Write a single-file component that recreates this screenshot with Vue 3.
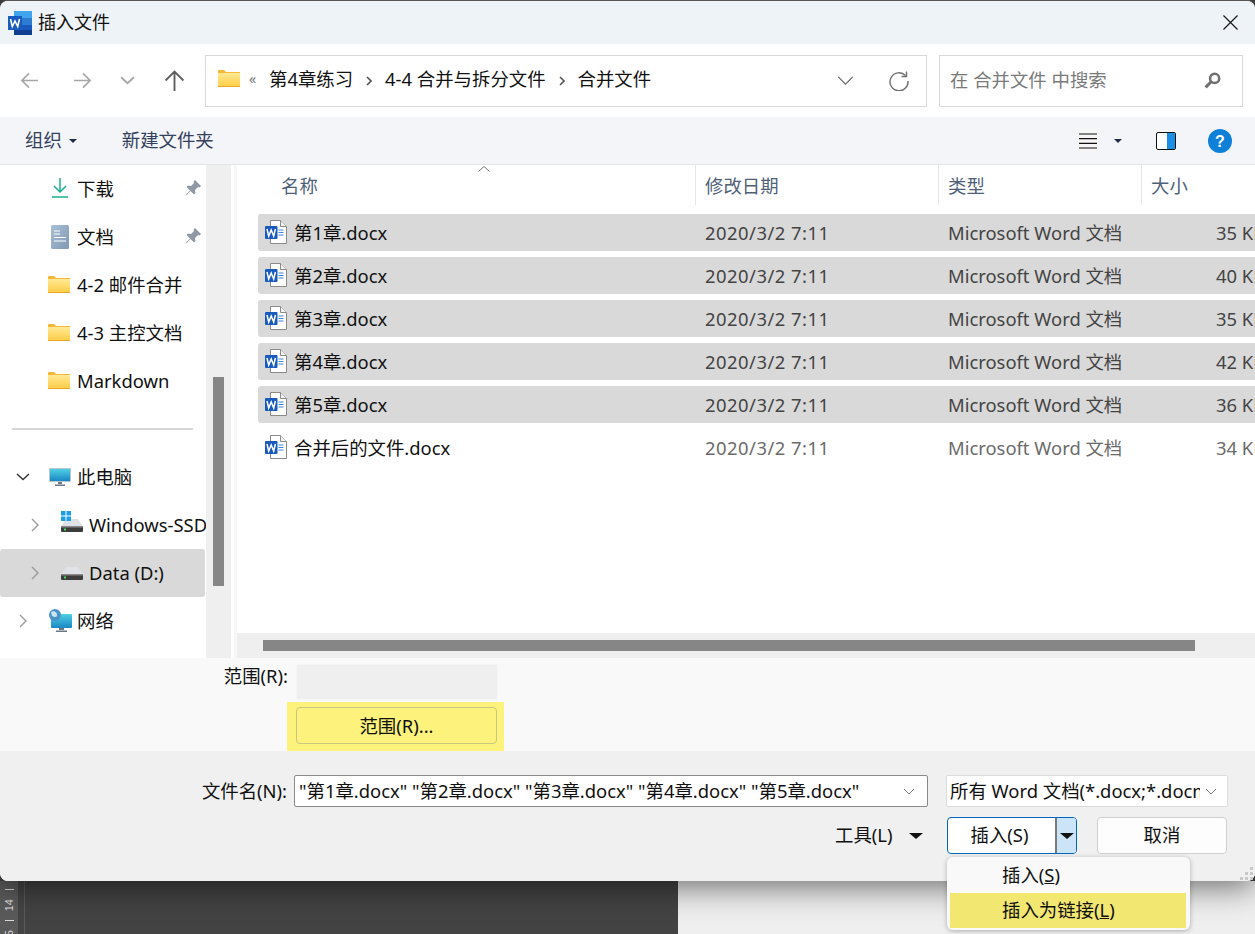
<script setup>
const quick = [
  { label: '4-2 邮件合并' },
  { label: '4-3 主控文档' },
  { label: 'Markdown' }
]
const files = [
  { name: '第1章.docx', size: '35 KB', selected: true },
  { name: '第2章.docx', size: '40 KB', selected: true },
  { name: '第3章.docx', size: '35 KB', selected: true },
  { name: '第4章.docx', size: '42 KB', selected: true },
  { name: '第5章.docx', size: '36 KB', selected: true },
  { name: '合并后的文件.docx', size: '34 KB', selected: false }
]
</script>

<template>
  <div class="page">
    <svg class="defs" width="0" height="0" aria-hidden="true">
      <defs>
        <linearGradient id="fold" x1="0" y1="0" x2="0" y2="1">
          <stop offset="0" stop-color="#ffe894" />
          <stop offset="1" stop-color="#ffcf4a" />
        </linearGradient>
        <linearGradient id="doc" x1="0" y1="0" x2="1" y2="1">
          <stop offset="0" stop-color="#a9c0d8" />
          <stop offset="1" stop-color="#7f98b3" />
        </linearGradient>
        <linearGradient id="screen" x1="0" y1="0" x2="0" y2="1">
          <stop offset="0" stop-color="#4fd0e4" />
          <stop offset="1" stop-color="#1a86c4" />
        </linearGradient>
        <symbol id="folder" viewBox="0 0 22 17">
          <path d="M0 1a1 1 0 0 1 1-1h5l2 2h14v15H0z" fill="#f5b93a" />
          <path d="M0 3h22v13H0z" fill="url(#fold)" />
          <path d="M0 16h22v1H0z" fill="#eba826" />
        </symbol>
        <symbol id="word" viewBox="0 0 22 24">
          <path d="M5.500 .5h10l6 6v17h-16z" fill="#fff" stroke="#8a8a8a" />
          <path d="M15.500 .5v6h6" fill="#f2f2f2" stroke="#8a8a8a" />
          <path d="M13.500 10h5M13.500 12.500h5M13.500 15h5" stroke="#3d85d8" stroke-width="1" />
          <rect x="0" y="6" width="12.500" height="13" rx="1" fill="#185abd" />
          <path d="M2 9l1.700 7 2.500-6 2.500 6 1.700-7" fill="none" stroke="#fff" stroke-width="1.500" />
        </symbol>
        <symbol id="pin" viewBox="0 0 16 16">
          <path d="M10 0l6 6-1.500 1.500L13 7l-3 3 .5 3L9 14.500 5.500 11 1 15.500l-.5-.5L5 10.500 1.500 7 3 5.500l3 .5 3-3-.5-1.500z" fill="#8f9aa6" />
        </symbol>
        <symbol id="drive" viewBox="0 0 22 14">
          <path d="M5 1h12l5 7H0z" fill="#dfe2e6" />
          <path d="M0 8h22v5a1 1 0 0 1-1 1H1a1 1 0 0 1-1-1z" fill="#3d3d3d" />
          <path d="M0 8h22v1.500H0z" fill="#8a8a8a" />
          <rect x="3" y="10.500" width="2" height="2" fill="#3fe04a" />
        </symbol>
      </defs>
    </svg>

    <div class="dialog">
      <header class="titlebar">
        <svg class="app-icon" viewBox="0 0 24 24">
          <rect x="6" y="0" width="18" height="7" fill="#41a5ee" />
          <rect x="6" y="7" width="18" height="7" fill="#2b7cd3" />
          <rect x="6" y="14" width="18" height="5" fill="#185abd" />
          <rect x="6" y="19" width="18" height="5" fill="#103f91" />
          <rect x="0" y="5" width="14" height="14" fill="#1a5cbd" />
          <path d="M2.500 8l1.800 7.500L7 10l2.700 5.500L11.500 8" fill="none" stroke="#fff" stroke-width="1.600" />
        </svg>
        <span class="title">插入文件</span>
        <svg class="close" viewBox="0 0 16 16"><path d="M.5.5l15 15M15.500.5l-15 15" stroke="#1a1a1a" stroke-width="1.300" /></svg>
      </header>

      <nav class="navbar">
        <svg class="nav-ic back" viewBox="0 0 20 20"><path d="M19 10H2M9.500 2.500L2 10l7.500 7.500" fill="none" stroke="#a8a8a8" stroke-width="1.800" /></svg>
        <svg class="nav-ic fwd" viewBox="0 0 20 20"><path d="M1 10h17M10.500 2.500L18 10l-7.500 7.500" fill="none" stroke="#a8a8a8" stroke-width="1.800" /></svg>
        <svg class="nav-down" viewBox="0 0 14 8"><path d="M1 1l6 5.500L13 1" fill="none" stroke="#a8a8a8" stroke-width="1.800" /></svg>
        <svg class="nav-up" viewBox="0 0 20 20"><path d="M10 20V2M1.500 10L10 1.500 18.500 10" fill="none" stroke="#5f5f5f" stroke-width="1.800" /></svg>
        <div class="address">
          <svg class="addr-folder"><use href="#folder" /></svg>
          <span class="laquo">«</span>
          <span class="crumb first">第4章练习</span>
          <svg class="sep" viewBox="0 0 6 10"><path d="M1 1l4 4-4 4" fill="none" stroke="#555" stroke-width="1.600" /></svg>
          <span class="crumb">4-4 合并与拆分文件</span>
          <svg class="sep" viewBox="0 0 6 10"><path d="M1 1l4 4-4 4" fill="none" stroke="#555" stroke-width="1.600" /></svg>
          <span class="crumb">合并文件</span>
          <svg class="addr-down" viewBox="0 0 18 10"><path d="M1 1l8 8 8-8" fill="none" stroke="#666" stroke-width="1.300" /></svg>
          <svg class="refresh" viewBox="0 0 20 20"><path d="M16.500 4.500A9 9 0 1 0 19 10" fill="none" stroke="#707070" stroke-width="1.400" /><path d="M17.500 .5v5h-5" fill="none" stroke="#707070" stroke-width="1.400" /></svg>
        </div>
        <div class="search">
          <span class="search-text">在 合并文件 中搜索</span>
          <svg class="search-ic" viewBox="0 0 16 16"><circle cx="10" cy="6" r="4.300" fill="none" stroke="#707070" stroke-width="2.400" /><path d="M6.800 9.200L1.500 14.500" stroke="#707070" stroke-width="2.800" /></svg>
        </div>
      </nav>

      <div class="toolbar">
        <span class="tool-text">组织</span>
        <i class="tri small"></i>
        <span class="tool-text newfolder">新建文件夹</span>
        <div class="tool-right">
          <span class="view-btn"><svg class="lines" viewBox="0 0 18 16"><path d="M0 1h18M0 5.700h18M0 10.300h18M0 15h18" stroke="#111" stroke-width="1.200" /></svg></span>
          <i class="tri small view-tri"></i>
          <svg class="pane" viewBox="0 0 20 18"><rect x=".5" y=".5" width="19" height="17" rx="1.500" fill="#fff" stroke="#111" /><rect x="11" y="1" width="8" height="16" fill="#1b8fe3" /></svg>
          <svg class="help" viewBox="0 0 24 24"><circle cx="12" cy="12" r="12" fill="#0f80d8" /><text x="12" y="17.500" class="help-q" text-anchor="middle">?</text></svg>
        </div>
      </div>

      <div class="content">
        <aside class="sidebar">
          <div class="tree">
            <div class="tree-row l1">
              <svg class="ic-dl" viewBox="0 0 16 20"><path d="M8 0v14M2 8l6 6 6-6" fill="none" stroke="#17b08f" stroke-width="1.500" /><path d="M0 19h16" stroke="#17b08f" stroke-width="1.500" /></svg>
              <span>下载</span>
              <svg class="pin"><use href="#pin" /></svg>
            </div>
            <div class="tree-row l1">
              <svg class="ic-doc" viewBox="0 0 18 24"><rect width="18" height="24" rx="1.500" fill="url(#doc)" /><path d="M3 6h6M3 9h6M3 12.500h12M3 16h12" stroke="#fff" stroke-width="1.200" /></svg>
              <span>文档</span>
              <svg class="pin"><use href="#pin" /></svg>
            </div>
            <div v-for="q in quick" :key="q.label" class="tree-row l1">
              <svg class="ic-folder"><use href="#folder" /></svg>
              <span>{{ q.label }}</span>
            </div>
            <div class="divider"></div>
            <div class="tree-row pc">
              <svg class="chev down" viewBox="0 0 14 8"><path d="M1 1l6 5.500L13 1" fill="none" stroke="#333" stroke-width="1.400" /></svg>
              <svg class="ic-pc" viewBox="0 0 22 18"><rect width="22" height="14" rx="1" fill="#b9c6cf" /><rect x="1" y="1" width="20" height="12" fill="url(#screen)" /><path d="M9 14h4v2H9zM6 16.500h10V18H6z" fill="#6b7780" /></svg>
              <span>此电脑</span>
            </div>
            <div class="tree-row l2">
              <svg class="chev" viewBox="0 0 8 14"><path d="M1 1l6 6-6 6" fill="none" stroke="#9a9a9a" stroke-width="1.400" /></svg>
              <span class="drive-wrap win">
                <svg class="winlogo" viewBox="0 0 10 10"><path d="M0 0h4.500v4.500H0zM5.500 0H10v4.500H5.500zM0 5.500h4.500V10H0zM5.500 5.500H10V10H5.500z" fill="#1c9fe8" /></svg>
                <svg class="ic-drive"><use href="#drive" /></svg>
              </span>
              <span class="cut">Windows-SSD (C:)</span>
            </div>
            <div class="tree-row l2 active">
              <svg class="chev" viewBox="0 0 8 14"><path d="M1 1l6 6-6 6" fill="none" stroke="#9a9a9a" stroke-width="1.400" /></svg>
              <span class="drive-wrap">
                <svg class="ic-drive"><use href="#drive" /></svg>
              </span>
              <span>Data (D:)</span>
            </div>
            <div class="tree-row net">
              <svg class="chev" viewBox="0 0 8 14"><path d="M1 1l6 6-6 6" fill="none" stroke="#9a9a9a" stroke-width="1.400" /></svg>
              <svg class="ic-net" viewBox="0 0 24 24"><rect x="3" y="5" width="21" height="14" rx="1" fill="url(#screen)" /><path d="M11 19h5v2h-5zM8 21.500h11V23H8z" fill="#6b7780" /><circle cx="7" cy="6" r="6" fill="#4a93c8" /><path d="M3 3c3-2 6 0 6 3s-3 2-5 1" fill="#c9e5f4" /></svg>
              <span>网络</span>
            </div>
          </div>
          <div class="vtrack"><div class="vthumb"></div></div>
        </aside>

        <section class="filepane">
          <div class="filehead">
            <svg class="sort" viewBox="0 0 12 6"><path d="M.5 5.500L6 .5l5.500 5" fill="none" stroke="#777" /></svg>
            <div class="hcell c-name">名称</div>
            <div class="hcell c-date">修改日期</div>
            <div class="hcell c-type">类型</div>
            <div class="hcell c-size">大小</div>
          </div>
          <div class="filelist">
            <div v-for="f in files" :key="f.name" class="file" :class="{ sel: f.selected }">
              <div class="c-name f-name"><svg class="ic-word"><use href="#word" /></svg><span>{{ f.name }}</span></div>
              <div class="c-date meta date">2020/3/2 7:11</div>
              <div class="c-type meta">Microsoft Word 文档</div>
              <div class="c-size meta">{{ f.size }}</div>
            </div>
          </div>
          <div class="htrack"><div class="hthumb"></div></div>
        </section>
      </div>

      <div class="rangebar">
        <div class="range-row">
          <span class="range-label">范围(R):</span>
          <div class="range-input"></div>
        </div>
        <div class="range-mark"><button class="range-btn">范围(R)...</button></div>
      </div>

      <footer class="footer">
        <div class="foot-row">
          <span class="fn-label">文件名(N):</span>
          <div class="fn-input">
            <span class="fn-value">"第1章.docx" "第2章.docx" "第3章.docx" "第4章.docx" "第5章.docx"</span>
            <svg class="combo" viewBox="0 0 12 7"><path d="M1 1l5 5 5-5" fill="none" stroke="#777" /></svg>
          </div>
          <div class="filter">
            <span class="filter-value">所有 Word 文档(*.docx;*.docm;*.dotx;*.dotm)</span>
            <svg class="combo" viewBox="0 0 12 7"><path d="M1 1l5 5 5-5" fill="none" stroke="#777" /></svg>
          </div>
        </div>
        <div class="foot-row actions">
          <span class="tools">工具(L)</span>
          <i class="tri big tools-tri"></i>
          <div class="split">
            <span class="split-main">插入(S)</span>
            <span class="split-arrow"><i class="tri big"></i></span>
          </div>
          <button class="cancel">取消</button>
        </div>
        <div class="menu">
          <div class="menu-item">插入(<u>S</u>)</div>
          <div class="menu-item hot">插入为链接(<u>L</u>)</div>
        </div>
        <svg class="grip" viewBox="0 0 13 13"><path d="M10 0h3v3h-3zM5 5h3v3H5zM10 5h3v3h-3zM0 10h3v3H0zM5 10h3v3H5zM10 10h3v3h-3z" fill="#c8c8c8" /></svg>
      </footer>
    </div>

    <div class="below">
      <div class="doc-area">
        <div class="ruler">
          <i class="tick"></i>
          <span class="rnum">14</span>
          <i class="tick"></i>
          <span class="rnum">15</span>
        </div>
        <div class="doc-bg"></div>
      </div>
      <div class="doc-light"></div>
    </div>
  </div>
</template>

<style>
html, body { margin: 0; background: #444; }
</style>

<style scoped>
.page {
  width: 1255px;
  height: 934px;
  overflow: hidden;
  display: flex;
  flex-direction: column;
  background: #444;
  font-family: "Noto Sans", "Noto Sans CJK SC", sans-serif;
  font-size: 18.4px;
  color: #111;
  line-height: 24px;
}
.defs { position: absolute; }
svg { display: block; flex: none; }
.dialog {
  height: 881px;
  flex: none;
  display: flex;
  flex-direction: column;
  background: #f0f0f0;
  border-radius: 8px;
  border-top: 1px solid #555;
  box-sizing: border-box;
  position: relative;
  z-index: 1;
  box-shadow: 0 6px 32px rgba(0, 0, 0, .55);
}
.titlebar {
  height: 43px;
  flex: none;
  background: #eef3f8;
  display: flex;
  align-items: center;
  padding-left: 8px;
  border-radius: 8px 8px 0 0;
}
.app-icon { width: 24px; height: 24px; }
.title { margin-left: 6px; font-size: 18px; padding-bottom: 2px; }
.close { width: 15px; height: 15px; margin-left: auto; margin-right: 17px; }
.navbar {
  height: 73px;
  flex: none;
  background: #fff;
  display: flex;
  align-items: center;
  padding-left: 20px;
}
.nav-ic { width: 19px; height: 19px; }
.fwd { margin-left: 34px; }
.nav-down { width: 15px; height: 9px; margin-left: 28px; }
.nav-up { width: 21px; height: 21px; margin-left: 29px; }
.address {
  width: 722px;
  height: 52px;
  box-sizing: border-box;
  margin-left: 20px;
  border: 1px solid #d9d9d9;
  display: flex;
  align-items: center;
  padding-left: 12px;
}
.addr-folder { width: 22px; height: 17px; margin-bottom: 4px; }
.laquo { margin-left: 9px; font-size: 14px; color: #777; width: 12px; padding-bottom: 4px; }
.crumb { white-space: nowrap; padding-bottom: 4px; }
.crumb.first { margin-left: 8px; }
.sep { width: 6px; height: 10px; margin: 0 13px; }
.addr-down { width: 17px; height: 9px; margin-left: auto; }
.refresh { width: 20px; height: 20px; margin: 0 17px 0 35px; }
.search {
  width: 304px;
  height: 52px;
  box-sizing: border-box;
  margin-left: 12px;
  border: 1px solid #d9d9d9;
  display: flex;
  align-items: center;
  justify-content: space-between;
  padding: 0 21px 0 10px;
}
.search-text { color: #7a7a7a; white-space: nowrap; padding-bottom: 2px; }
.search-ic { width: 17px; height: 17px; }
.toolbar {
  height: 48px;
  flex: none;
  box-sizing: border-box;
  background: #f3f5f8;
  border-bottom: 1px solid #e5e5e5;
  display: flex;
  align-items: center;
  padding-left: 25px;
}
.tool-text { color: #33415c; padding-bottom: 2px; }
.newfolder { margin-left: 45px; }
.tri {
  display: block;
  flex: none;
  width: 0;
  height: 0;
  border-style: solid;
  border-color: #111 transparent transparent;
}
.tri.small {
  border-width: 4px 4px 0;
  border-top-color: #1d2c4a;
  margin-left: 7px;
}
.tri.big { border-width: 6px 7px 0; }
.tool-right {
  margin-left: auto;
  display: flex;
  align-items: center;
  padding-right: 23px;
}
.view-btn {
  width: 24px;
  height: 24px;
  background: #f6f6f6;
  display: flex;
  align-items: center;
  justify-content: center;
}
.lines { width: 18px; height: 16px; }
.tri.view-tri { margin-left: 14px; }
.pane { width: 20px; height: 18px; margin-left: 34px; }
.help { width: 24px; height: 24px; margin-left: 32px; }
.help-q { fill: #fff; font-size: 16px; font-weight: 700; font-family: "Liberation Sans", sans-serif; }
.content {
  height: 493px;
  flex: none;
  display: flex;
  background: #fff;
}
.sidebar {
  width: 231px;
  flex: none;
  display: flex;
}
.tree { width: 206px; flex: none; overflow: hidden; }
.tree-row {
  height: 48px;
  box-sizing: border-box;
  display: flex;
  align-items: center;
  white-space: nowrap;
  border-radius: 3px;
}
.tree-row.l1 { padding-left: 48px; }
.ic-dl { width: 16px; height: 22px; margin: 0 9px 2px 4px; }
.ic-doc { width: 18px; height: 24px; margin: 0 8px 1px 3px; }
.ic-folder { width: 22px; height: 17px; margin: 0 7px 2px 0; }
.pin { width: 16px; height: 16px; margin: 0 5px 2px auto; }
.divider { height: 2px; background: #d6d6d6; margin: 23px 13px 23px 12px; }
.tree-row.pc { padding-left: 16px; }
.chev.down { width: 14px; height: 8px; }
.ic-pc { width: 22px; height: 18px; margin: 0 6px 0 19px; }
.chev { width: 8px; height: 14px; }
.tree-row.l2 { padding-left: 31px; }
.drive-wrap {
  width: 22px;
  height: 14px;
  margin-left: 22px;
  margin-right: 6px;
  position: relative;
  flex: none;
}
.ic-drive { width: 22px; height: 14px; }
.drive-wrap.win { margin-top: -1px; }
.winlogo { width: 10px; height: 10px; position: absolute; left: 0; top: -7px; }
.cut { white-space: nowrap; }
.active { background: #d9d9d9; width: 205px; }
.tree-row.net { padding-left: 19px; }
.ic-net { width: 24px; height: 24px; margin: 0 5px 0 21px; }
.vtrack {
  width: 25px;
  flex: none;
  background: #efefef;
  display: flex;
  justify-content: center;
  box-sizing: border-box;
  padding-top: 212px;
}
.vthumb { width: 11px; height: 209px; background: #868686; }
.filepane {
  flex: 1;
  min-width: 0;
  margin-left: 3px;
  border-left: 3px solid #f7f7f7;
  display: flex;
  flex-direction: column;
  overflow: hidden;
  position: relative;
}
.filehead {
  height: 49px;
  flex: none;
  display: grid;
  grid-template-columns: 459px 243px 203px 114px;
  box-sizing: border-box;
}
.sort { width: 12px; height: 6px; position: absolute; left: 241px; top: 1px; }
.hcell {
  color: #4f6178;
  height: 40px;
  border-right: 1px solid #e5e5e5;
  padding-left: 9px;
  padding-top: 9px;
  box-sizing: border-box;
}
.hcell.c-name { padding-left: 44px; }
.hcell.c-size { border-right: 0; }
.filelist { flex: 1; min-height: 0; padding-left: 21px; }
.file {
  width: 1000px;
  height: 37px;
  margin-bottom: 6px;
  display: grid;
  grid-template-columns: 438px 243px 203px 114px;
  align-items: center;
  border-radius: 3px 0 0 3px;
  white-space: nowrap;
}
.file.sel { background: #d9d9d9; }
.f-name { display: flex; align-items: center; padding-left: 7px; }
.ic-word { width: 22px; height: 24px; margin-right: 7px; margin-top: -1px; }
.meta { padding-left: 9px; color: #6b6b6b; }
.meta.date { letter-spacing: .5px; }
.file.sel .meta { color: #444; }
.c-size.meta { padding-left: 74px; }
.htrack {
  height: 25px;
  flex: none;
  background: #efefef;
  padding: 7px 0 0 26px;
  box-sizing: border-box;
}
.hthumb { width: 932px; height: 11px; background: #868686; }
.rangebar {
  height: 93px;
  flex: none;
  box-sizing: border-box;
  background: #f9f9f9;
  padding-top: 6px;
}
.range-row { display: flex; align-items: flex-start; height: 36px; }
.range-label { width: 288px; text-align: right; white-space: nowrap; }
.range-input {
  width: 202px;
  height: 36px;
  box-sizing: border-box;
  margin-left: 8px;
  background: #efefef;
  border: 1px solid #f6f6f6;
  border-radius: 2px;
}
.range-mark {
  width: 217px;
  height: 49px;
  margin: 2px 0 0 287px;
  box-sizing: border-box;
  background: #fdf27c;
  padding: 5px 0 0 9px;
}
.range-btn {
  display: block;
  width: 201px;
  height: 37px;
  padding: 0;
  background: transparent;
  border: 1px solid #c9c682;
  border-radius: 4px;
  font: inherit;
  color: #111;
}
.footer {
  flex: 1;
  min-height: 0;
  background: #f0f0f0;
  position: relative;
  border-radius: 0 0 8px 8px;
  padding-top: 24px;
  box-sizing: border-box;
}
.foot-row { display: flex; align-items: center; }
.fn-label { width: 287px; text-align: right; white-space: nowrap; }
.fn-input, .filter {
  height: 32px;
  box-sizing: border-box;
  background: #fff;
  display: flex;
  align-items: center;
  justify-content: space-between;
  border-radius: 2px;
}
.fn-input {
  width: 634px;
  margin-left: 7px;
  border: 1px solid #8a8a8a;
  padding: 0 12px 0 4px;
}
.fn-value { white-space: nowrap; }
.filter {
  width: 282px;
  margin-left: 18px;
  border: 1px solid #dcdcdc;
  padding: 0 10px 0 3px;
}
.filter-value {
  width: 250px;
  overflow: hidden;
  white-space: nowrap;
}
.combo { width: 12px; height: 7px; }
.actions { margin-top: 10px; height: 37px; padding-left: 835px; }
.tools { width: 57px; white-space: nowrap; padding-bottom: 2px; }
.tools-tri { margin-left: 17px; }
.split {
  width: 130px;
  height: 37px;
  box-sizing: border-box;
  margin-left: 24px;
  border: 1px solid #0067c0;
  border-radius: 4px;
  background: #fff;
  display: flex;
  overflow: hidden;
}
.split-main { width: 107px; text-align: center; line-height: 33px; padding-right: 4px; box-sizing: border-box; }
.split-arrow {
  flex: 1;
  background: #cce4f7;
  border-left: 2px solid #7a7a7a;
  display: flex;
  align-items: center;
  justify-content: center;
}
.cancel {
  width: 130px;
  height: 37px;
  margin-left: 20px;
  padding: 0 0 2px;
  background: #fdfdfd;
  border: 1px solid #d0d0d0;
  border-radius: 4px;
  font: inherit;
  color: #111;
}
.menu {
  position: absolute;
  left: 947px;
  top: 106px;
  width: 243px;
  height: 73px;
  box-sizing: border-box;
  background: #f9f9f9;
  border-radius: 6px;
  box-shadow: 0 1px 5px rgba(0, 0, 0, .28);
  padding-top: 1px;
  z-index: 3;
}
.menu-item { height: 35px; line-height: 33px; padding-left: 55px; }
.menu-item.hot {
  background: #f2e871;
  margin: 0 4px 0 3px;
  padding-left: 52px;
}
.grip { width: 13px; height: 13px; position: absolute; right: 2px; bottom: 1px; }
.below { flex: 1; min-height: 0; display: flex; }
.doc-area { width: 678px; flex: none; display: flex; background: #444; }
.ruler {
  width: 18px;
  flex: none;
  background: #5a5a5a;
  display: flex;
  flex-direction: column;
  align-items: center;
  padding-top: 8px;
  overflow: hidden;
}
.tick { width: 9px; height: 1px; background: #d8d8d8; flex: none; }
.rnum {
  writing-mode: vertical-rl;
  transform: rotate(180deg);
  font-family: "Liberation Sans", sans-serif;
  font-size: 11px;
  line-height: 12px;
  color: #d8d8d8;
  margin: 9px 0;
  flex: none;
}
.doc-bg {
  flex: 1;
  background: #434343;
  margin-left: 6px;
  border-left: 1px solid #5a5a5a;
}
.doc-light { flex: 1; background: #efefef; }
</style>
